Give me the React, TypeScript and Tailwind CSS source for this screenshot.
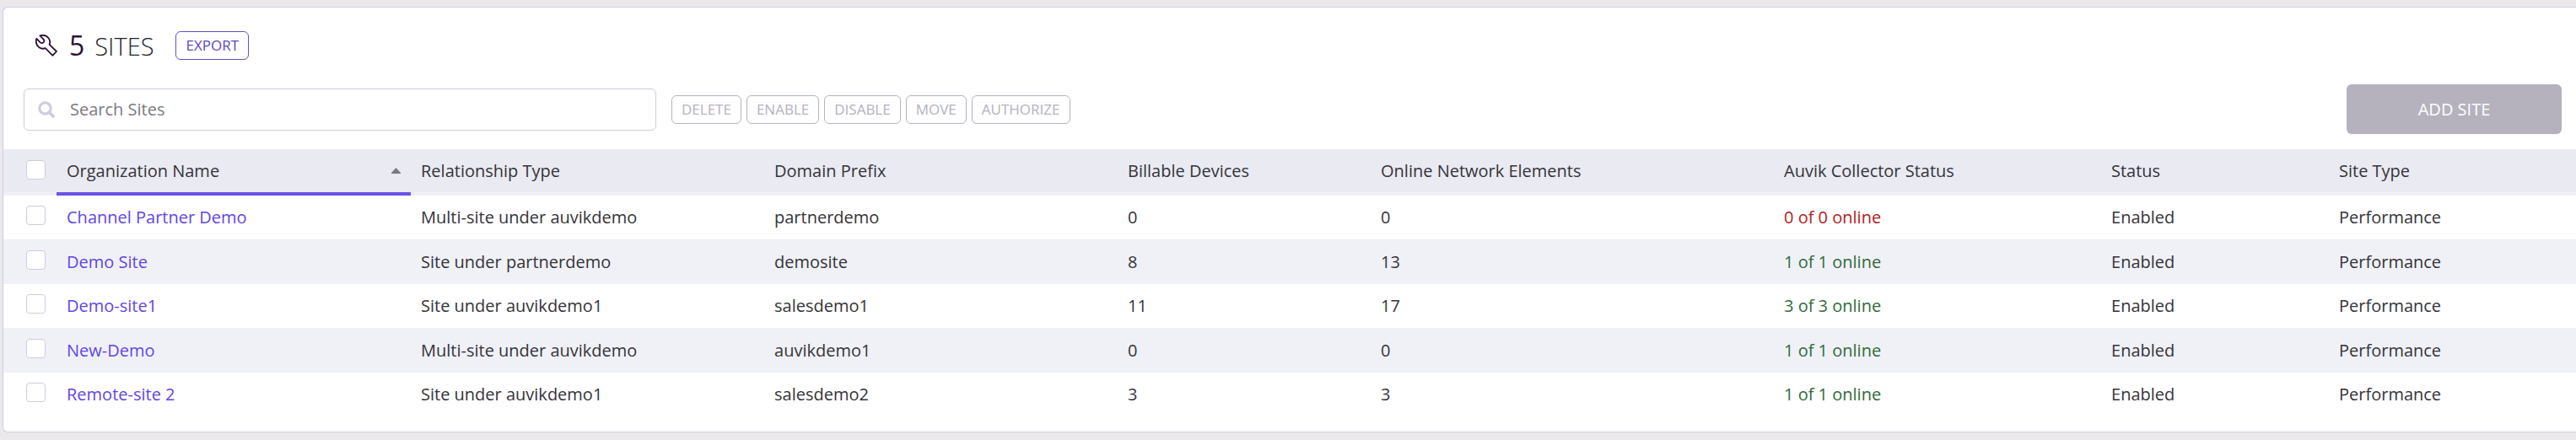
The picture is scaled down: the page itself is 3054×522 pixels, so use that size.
import React from "react";

type Site = {
  name: string;
  relationship: string;
  prefix: string;
  billable: number;
  elements: number;
  collectors: string;
  online: boolean;
};

const sites: Site[] = [
  { name: "Channel Partner Demo", relationship: "Multi-site under auvikdemo", prefix: "partnerdemo", billable: 0, elements: 0, collectors: "0 of 0 online", online: false },
  { name: "Demo Site", relationship: "Site under partnerdemo", prefix: "demosite", billable: 8, elements: 13, collectors: "1 of 1 online", online: true },
  { name: "Demo-site1", relationship: "Site under auvikdemo1", prefix: "salesdemo1", billable: 11, elements: 17, collectors: "3 of 3 online", online: true },
  { name: "New-Demo", relationship: "Multi-site under auvikdemo", prefix: "auvikdemo1", billable: 0, elements: 0, collectors: "1 of 1 online", online: true },
  { name: "Remote-site 2", relationship: "Site under auvikdemo1", prefix: "salesdemo2", billable: 3, elements: 3, collectors: "1 of 1 online", online: true },
];

const columns = [
  { label: "Relationship Type", weight: 419 },
  { label: "Domain Prefix", weight: 419 },
  { label: "Billable Devices", weight: 300 },
  { label: "Online Network Elements", weight: 478 },
  { label: "Auvik Collector Status", weight: 388 },
  { label: "Status", weight: 270 },
  { label: "Site Type", weight: 293 },
];

const firstWeight = 420;
const totalWeight = 3050;
const share = (weight: number) => ({ width: `${(weight / totalWeight) * 100}%` });

function Checkbox({ label }: { label: string }) {
  return (
    <input
      type="checkbox"
      aria-label={label}
      className="block size-[23px] appearance-none rounded-[4px] border border-[#cfccdd] bg-white checked:bg-[#6b52e8]"
    />
  );
}

function WrenchIcon() {
  return (
    <svg viewBox="0 0 26 26" className="size-[26px]" fill="none" stroke="#2b1236" strokeWidth="1.8" strokeLinejoin="round" aria-hidden="true">
      <path d="M5.4 1.4 C9 .2 13.2 1 15.6 4.2 C17.4 6.6 17.6 9.2 16.6 11.8 L25 20 L20.4 24.8 L11.8 16.2 C8.8 17.2 5.6 16.6 3.4 14.4 C1 12 .2 8.2 1.4 4.8 L5.8 9.4 C7 10.4 8.6 10.2 9.6 9.2 C10.6 8.2 10.6 6.8 9.6 5.6 Z" />
    </svg>
  );
}

function SearchIcon() {
  return (
    <svg viewBox="0 0 20 20" className="size-5 shrink-0" fill="none" stroke="#cfccdd" aria-hidden="true">
      <circle cx="8.5" cy="8.5" r="6.7" strokeWidth="3.2" />
      <path d="M13.5 13.5 L18 18" strokeWidth="3.8" strokeLinecap="round" />
    </svg>
  );
}

export default function App() {
  return (
    <div className="min-h-screen bg-[#eae8eb] pt-2 pl-[3px] font-['Open_Sans','Noto_Sans',sans-serif] text-[20px] leading-7 text-[#343439]">
      <main className="rounded-l-[6px] border border-r-0 border-[#cfccdd] bg-white pb-[18px]">
        <header className="mt-7 flex h-[34px] items-center pl-[38px]">
          <WrenchIcon />
          <h1 className="ml-[14px] flex items-baseline gap-3 leading-9">
            <span className="text-[32px] font-medium text-[#2b1236]">5</span>
            <span className="text-[29px] font-light text-[#222227]">SITES</span>
          </h1>
          <button type="button" className="ml-[26px] h-[34px] rounded-[6px] border border-[#6650c4] px-[11px] text-[17px] leading-6 text-[#5f48c2]">
            EXPORT
          </button>
        </header>

        <div className="mt-[29px] flex items-center pr-[17px] pl-6">
          <label className="flex h-[50px] w-[750px] items-center gap-[18px] rounded-[6px] border border-[#cfccdd] pl-4">
            <SearchIcon />
            <input type="text" aria-label="Search Sites" placeholder="Search Sites" className="min-w-0 flex-1 bg-transparent outline-none placeholder:text-[#7b7a80]" />
          </label>
          <div className="ml-[18px] flex gap-[6px]">
            {["DELETE", "ENABLE", "DISABLE", "MOVE", "AUTHORIZE"].map((action) => (
              <button key={action} type="button" disabled className="h-[34px] rounded-[6px] border border-[#b5b2be] px-[11px] text-[17px] leading-6 text-[#b5b2be]">
                {action}
              </button>
            ))}
          </div>
          <button type="button" disabled className="ml-auto h-[59px] w-[255px] rounded-[6px] bg-[#b5b2be] text-white">
            ADD SITE
          </button>
        </div>

        <table className="mt-[18px] w-full table-fixed border-separate border-spacing-0 text-left">
          <colgroup>
            <col className="w-[63px]" />
            <col style={share(firstWeight)} />
            {columns.map((column) => (
              <col key={column.label} style={share(column.weight)} />
            ))}
          </colgroup>
          <thead className="bg-[#eaeaf2]">
            <tr>
              <th className="border-b-4 border-[#f0f1f7] pb-[2px] pl-[27px] font-normal">
                <Checkbox label="Select all sites" />
              </th>
              <th aria-sort="ascending" className="h-[55px] border-b-4 border-[#6b52e8] px-3 font-normal">
                <button type="button" className="flex w-full items-center justify-between">
                  Organization Name
                  <svg viewBox="0 0 11 7" className="h-[7px] w-[11px]" fill="#7b7a80" aria-hidden="true">
                    <path d="M5.5 0 L11 6 V7 H0 V6 Z" />
                  </svg>
                </button>
              </th>
              {columns.map((column) => (
                <th key={column.label} className="border-b-4 border-[#f0f1f7] px-3 font-normal">
                  {column.label}
                </th>
              ))}
            </tr>
          </thead>
          <tbody>
            {sites.map((site) => (
              <tr key={site.name} className="odd:h-[52px] even:h-[53px] even:bg-[#f0f1f7]">
                <td className="pb-[5px] pl-[27px]">
                  <Checkbox label={`Select ${site.name}`} />
                </td>
                <td className="px-3">
                  <a href="#" className="text-[#6246e5]">{site.name}</a>
                </td>
                <td className="px-3">{site.relationship}</td>
                <td className="px-3">{site.prefix}</td>
                <td className="px-3">{site.billable}</td>
                <td className="px-3">{site.elements}</td>
                <td className={site.online ? "px-3 text-[#2f6b3a]" : "px-3 text-[#b3201f]"}>{site.collectors}</td>
                <td className="px-3">Enabled</td>
                <td className="px-3">Performance</td>
              </tr>
            ))}
          </tbody>
        </table>
      </main>
    </div>
  );
}
